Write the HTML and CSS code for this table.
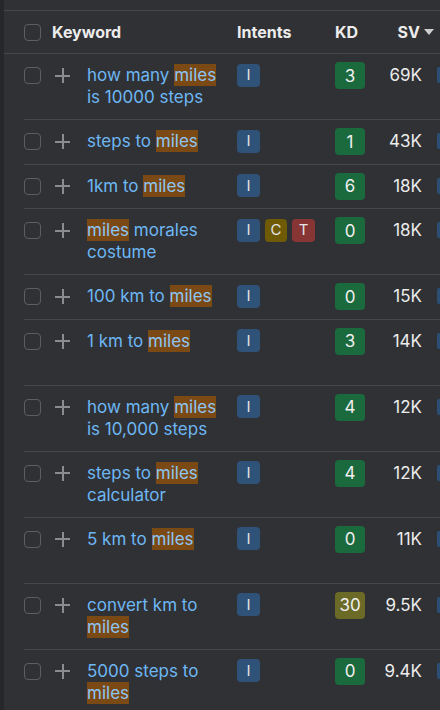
FILE: index.html
```html
<!DOCTYPE html>
<html>
<head>
<meta charset="utf-8">
<link rel="stylesheet" href="styles.css">
</head>
<body>
<div class="page">
  <div class="head">
    <span class="cb"></span>
    <span class="h-kw">Keyword</span>
    <span class="h-int">Intents</span>
    <span class="h-kd">KD</span>
    <span class="h-sv">SV<span class="tri"></span></span>
  </div>
  <div class="rows">
    <div class="row">
      <span class="cb"></span><span class="plus"></span>
      <span class="kw">how many <mark>miles</mark> is 10000 steps</span>
      <span class="ints"><span class="b bi">I</span></span>
      <span class="kd g">3</span><span class="sv">69K</span><span class="spark"></span>
    </div>
    <div class="row">
      <span class="cb"></span><span class="plus"></span>
      <span class="kw">steps to <mark>miles</mark></span>
      <span class="ints"><span class="b bi">I</span></span>
      <span class="kd g">1</span><span class="sv">43K</span><span class="spark"></span>
    </div>
    <div class="row">
      <span class="cb"></span><span class="plus"></span>
      <span class="kw">1km to <mark>miles</mark></span>
      <span class="ints"><span class="b bi">I</span></span>
      <span class="kd g">6</span><span class="sv">18K</span><span class="spark"></span>
    </div>
    <div class="row">
      <span class="cb"></span><span class="plus"></span>
      <span class="kw"><mark>miles</mark> morales costume</span>
      <span class="ints"><span class="b bi">I</span><span class="b bc">C</span><span class="b bt">T</span></span>
      <span class="kd g">0</span><span class="sv">18K</span><span class="spark"></span>
    </div>
    <div class="row">
      <span class="cb"></span><span class="plus"></span>
      <span class="kw">100 km to <mark>miles</mark></span>
      <span class="ints"><span class="b bi">I</span></span>
      <span class="kd g">0</span><span class="sv">15K</span><span class="spark"></span>
    </div>
    <div class="row tall">
      <span class="cb"></span><span class="plus"></span>
      <span class="kw">1 km to <mark>miles</mark></span>
      <span class="ints"><span class="b bi">I</span></span>
      <span class="kd g">3</span><span class="sv">14K</span><span class="spark"></span>
    </div>
    <div class="row">
      <span class="cb"></span><span class="plus"></span>
      <span class="kw">how many <mark>miles</mark> is 10,000 steps</span>
      <span class="ints"><span class="b bi">I</span></span>
      <span class="kd g">4</span><span class="sv">12K</span><span class="spark"></span>
    </div>
    <div class="row">
      <span class="cb"></span><span class="plus"></span>
      <span class="kw">steps to <mark>miles</mark> calculator</span>
      <span class="ints"><span class="b bi">I</span></span>
      <span class="kd g">4</span><span class="sv">12K</span><span class="spark"></span>
    </div>
    <div class="row tall">
      <span class="cb"></span><span class="plus"></span>
      <span class="kw">5 km to <mark>miles</mark></span>
      <span class="ints"><span class="b bi">I</span></span>
      <span class="kd g">0</span><span class="sv">11K</span><span class="spark"></span>
    </div>
    <div class="row">
      <span class="cb"></span><span class="plus"></span>
      <span class="kw">convert km to <mark>miles</mark></span>
      <span class="ints"><span class="b bi">I</span></span>
      <span class="kd y">30</span><span class="sv">9.5K</span><span class="spark"></span>
    </div>
    <div class="row">
      <span class="cb"></span><span class="plus"></span>
      <span class="kw">5000 steps to <mark>miles</mark></span>
      <span class="ints"><span class="b bi">I</span></span>
      <span class="kd g">0</span><span class="sv">9.4K</span><span class="spark"></span>
    </div>
  </div>
</div>
</body>
</html>
```
FILE: styles.css
```css
html, body {
  margin: 0;
  padding: 0;
  background: #303134;
  overflow: hidden;
}
body {
  font-family: Inter, "Noto Sans", sans-serif;
  color: #e6e6e6;
}
.page {
  border-left: 4px solid #262729;
  min-height: 710px;
  padding-top: 10px;
  box-sizing: border-box;
}
.head {
  display: grid;
  grid-template-columns: 20px 28px 185px 98px 30px 69px;
  align-items: center;
  height: 42px;
  border-top: 1px solid #46474a;
  border-bottom: 1px solid #46474a;
  font-weight: 700;
  font-size: 16px;
  color: #ececec;
}
.head .cb { grid-column: 2; }
.h-kw { grid-column: 3; }
.h-int { grid-column: 4; }
.h-kd { grid-column: 5; }
.h-sv {
  grid-column: 6;
  justify-self: end;
  display: flex;
  align-items: center;
}
.tri {
  width: 0;
  height: 0;
  border-left: 5px solid transparent;
  border-right: 5px solid transparent;
  border-top: 6px solid #cfcfcf;
  margin-left: 4px;
}
.rows { margin-left: 20px; }
.row {
  display: grid;
  grid-template-columns: 31px 32px 150px 98px 30px 57px 1fr;
  align-items: start;
  padding: 10px 0 11px;
  border-bottom: 1px solid #46474a;
  font-size: 17px;
  line-height: 22px;
}
.row.tall { min-height: 44px; }
.cb {
  display: block;
  width: 17px;
  height: 17px;
  box-sizing: border-box;
  border: 1.5px solid #5d5e61;
  border-radius: 4px;
}
.row .cb { margin-top: 3px; }
.plus {
  position: relative;
  display: block;
  width: 15px;
  height: 15px;
  margin-top: 4px;
}
.plus::before, .plus::after {
  content: "";
  position: absolute;
  background: #8b8c8f;
}
.plus::before { left: 0; right: 0; top: 6.5px; height: 2px; }
.plus::after { top: 0; bottom: 0; left: 6.5px; width: 2px; }
.kw {
  color: #6db7f4;
  padding-right: 6px;
}
mark {
  background: #7b4913;
  color: #8cc6f6;
  padding: 1px 0;
}
.ints { display: flex; gap: 5px; }
.b {
  width: 23px;
  height: 23px;
  margin-top: -0.5px;
  border-radius: 4px;
  display: flex;
  align-items: center;
  justify-content: center;
  font-size: 15px;
  color: #e4e4e4;
}
.bi { background: #2f5279; }
.bc { background: #6f5a05; width: 22px; }
.bt { background: #873535; }
.kd {
  width: 30px;
  height: 27px;
  margin: -2px 0 -3px;
  border-radius: 4px;
  display: flex;
  align-items: center;
  justify-content: center;
  font-size: 17px;
  color: #f0f0f0;
}
.g { background: #1b6a3e; }
.y { background: #6b6a27; }
.sv {
  text-align: right;
  color: #ececec;
}
.spark {
  display: block;
  margin-left: 15px;
  margin-top: 3px;
  width: 8px;
  height: 16px;
  background: #2c4d74;
  border-radius: 2px;
}
```
